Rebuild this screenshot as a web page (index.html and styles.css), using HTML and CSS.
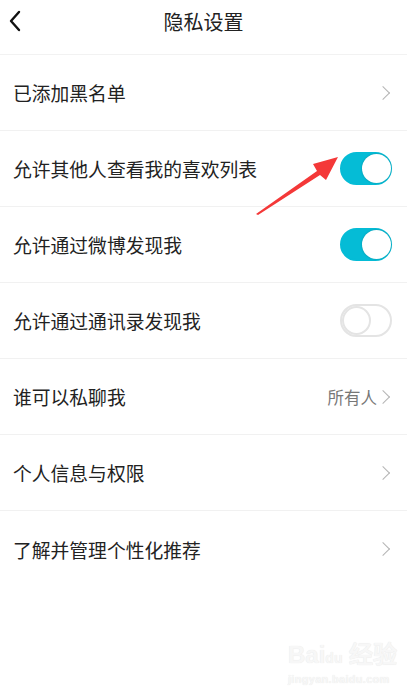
FILE: index.html
```html
<!DOCTYPE html>
<html lang="zh-CN">
  <head>
    <meta charset="UTF-8" />
    <meta name="viewport" content="width=device-width, initial-scale=1.0" />
    <title>隐私设置</title>
    <link rel="stylesheet" href="styles.css">
  </head>
  <body>
    <div class="page">
      <header class="top-bar">
        <button class="back-btn" aria-label="返回">
          <svg width="14" height="22" viewBox="0 0 14 22">
            <polyline points="11,2 3,11 11,20" fill="none" stroke="#111" stroke-width="2.4" stroke-linecap="round" stroke-linejoin="round" />
          </svg>
        </button>
        <h1>隐私设置</h1>
      </header>

      <ul class="settings">
        <li class="row">
          <span class="label">已添加黑名单</span>
          <span class="chevron"></span>
        </li>
        <li class="row">
          <span class="label">允许其他人查看我的喜欢列表</span>
          <span class="switch on"><span class="knob"></span></span>
        </li>
        <li class="row">
          <span class="label">允许通过微博发现我</span>
          <span class="switch on"><span class="knob"></span></span>
        </li>
        <li class="row">
          <span class="label">允许通过通讯录发现我</span>
          <span class="switch"><span class="knob"></span></span>
        </li>
        <li class="row">
          <span class="label">谁可以私聊我</span>
          <span class="value">所有人</span>
          <span class="chevron"></span>
        </li>
        <li class="row">
          <span class="label">个人信息与权限</span>
          <span class="chevron"></span>
        </li>
        <li class="row last">
          <span class="label">了解并管理个性化推荐</span>
          <span class="chevron"></span>
        </li>
      </ul>

      <!-- red annotation arrow drawn over the list -->
      <svg class="annotation" width="407" height="698" viewBox="0 0 407 698">
        <polygon points="256,214 317,171 313,164 338,157 326,180 320,175 258,215" fill="#f43838" />
      </svg>

      <div class="watermark">
        <div class="wm-logo">Bai<span class="wm-paw">du</span> 经验</div>
        <div class="wm-url">jingyan.baidu.com</div>
      </div>
    </div>
  </body>
</html>
```

FILE: styles.css
```css
/* Reset */
* {
  margin: 0;
  padding: 0;
  box-sizing: border-box;
}

body {
  background: #ffffff;
  color: #222;
  font-family: "Noto Sans CJK SC", "Noto Sans", sans-serif;
}

.page {
  position: relative;
  width: 407px;
  height: 698px;
  overflow: hidden;
}

/* Header */
.top-bar {
  position: relative;
  height: 55px;
  display: flex;
  align-items: center;
  justify-content: center;
  border-bottom: 1px solid #f2f2f2;
}

.top-bar h1 {
  font-size: 20px;
  font-weight: 400;
  color: #222;
  margin-top: -12px;
}

.back-btn {
  position: absolute;
  left: 8px;
  top: 10px;
  border: none;
  background: none;
  display: flex;
}

/* Settings list */
.settings {
  list-style: none;
}

.row {
  height: 76px;
  display: flex;
  align-items: center;
  padding: 0 15px 0 13px;
  border-bottom: 1px solid #f1f1f1;
}

.row.last {
  border-bottom: none;
}

.label {
  flex: 1;
  font-size: 18.8px;
  color: #222;
}

.value {
  font-size: 16.5px;
  color: #777;
  margin-right: 1px;
}

.chevron {
  width: 10px;
  height: 10px;
  border-top: 1.5px solid #b4b4b4;
  border-right: 1.5px solid #b4b4b4;
  transform: rotate(45deg);
  margin-right: 4px;
}

/* Toggle switch */
.switch {
  position: relative;
  width: 52px;
  height: 33px;
  border-radius: 17px;
  background: #fff;
  border: 2px solid #e4e4e4;
}

.switch .knob {
  position: absolute;
  left: 0;
  top: 0;
  width: 29px;
  height: 29px;
  border-radius: 50%;
  background: #fff;
  border: 2px solid #e4e4e4;
}

.switch.on {
  background: #05bcd6;
  border-color: #05bcd6;
}

.switch.on .knob {
  left: auto;
  right: -1px;
  top: 0;
  border: none;
  box-shadow: 0 0 2px rgba(0, 0, 0, 0.25);
}

/* Overlays */
.annotation {
  position: absolute;
  left: 0;
  top: 0;
  pointer-events: none;
}

.watermark {
  position: absolute;
  left: 288px;
  top: 640px;
  color: #f7f7f7;
  font-family: "Liberation Sans", sans-serif;
  font-weight: 700;
  text-shadow: 0 0 1px #e2e2e2;
}

.wm-logo {
  font-size: 24px;
  line-height: 30px;
}

.wm-paw {
  font-size: 14px;
}

.wm-url {
  font-size: 11px;
  letter-spacing: 0.3px;
}
```
